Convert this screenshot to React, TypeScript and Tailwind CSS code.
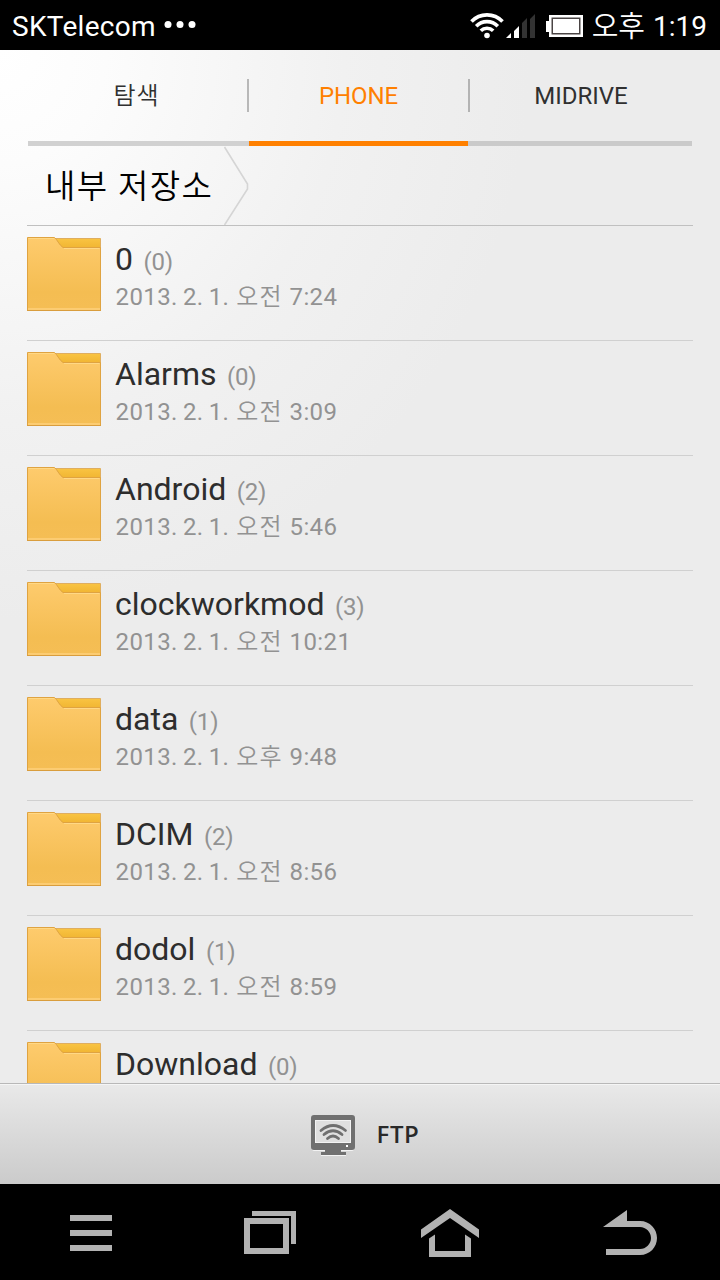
type Folder = { name: string; count: number; date?: string; ampm?: string; time?: string };

const folders: Folder[] = [
    { name: '0', count: 0, date: '2013. 2. 1.', ampm: '오전', time: '7:24' },
    { name: 'Alarms', count: 0, date: '2013. 2. 1.', ampm: '오전', time: '3:09' },
    { name: 'Android', count: 2, date: '2013. 2. 1.', ampm: '오전', time: '5:46' },
    { name: 'clockworkmod', count: 3, date: '2013. 2. 1.', ampm: '오전', time: '10:21' },
    { name: 'data', count: 1, date: '2013. 2. 1.', ampm: '오후', time: '9:48' },
    { name: 'DCIM', count: 2, date: '2013. 2. 1.', ampm: '오전', time: '8:56' },
    { name: 'dodol', count: 1, date: '2013. 2. 1.', ampm: '오전', time: '8:59' },
    { name: 'Download', count: 0 },
];

function StatusBar() {
    return (
        <header className="flex h-[50px] shrink-0 items-center bg-black pl-3 pr-[13px] text-[28px] leading-[50px] text-white">
            <span className="pt-1 tracking-[0.3px]">SKTelecom</span>
            <svg className="ml-2" width="34" height="10" viewBox="0 0 34 10" fill="#fff">
                <circle cx="4" cy="4.5" r="3.5" />
                <circle cx="16" cy="4.5" r="3.5" />
                <circle cx="28" cy="4.5" r="3.5" />
            </svg>
            <svg className="ml-auto" width="114" height="30" viewBox="0 0 114 30">
                {/* Wifi */}
                <g fill="none" stroke="#fff" strokeWidth="3.6">
                    <path d="M1.5 11.5a21.5 21.5 0 0 1 31 0" />
                    <path d="M6.2 16.2a15 15 0 0 1 21.6 0" />
                    <path d="M10.8 20.8a8.8 8.8 0 0 1 12.4 0" />
                </g>
                <circle cx="17" cy="25.5" r="2.8" fill="#fff" />
                {/* Signal */}
                <path d="M36 28l5-5v5zM44 28v-7l5-5v12z" fill="#fff" />
                <path d="M52 28V13l5-5v20zM60 28V9l5-5v24z" fill="#333" />
                {/* Battery */}
                <path d="M79 5h34v22H79v-5h-3V11h3z" fill="#fff" />
                <path d="M81.500 7.500h29v17h-29z" fill="#4a4444" />
                <rect x="83" y="9" width="26" height="14" fill="#fff" />
            </svg>
            <span className="ml-2 pt-1 text-[29px] font-[350]">오후</span>
            <span className="ml-2 pt-1">1:19</span>
        </header>
    );
}

function Tabs() {
    return (
        <nav className="mx-7 grid h-24 shrink-0 grid-cols-[221px_219px_224px] text-center text-[24px] leading-[93px] text-[#303030]">
            <div className="flex h-24 items-center justify-end border-b-[5px] border-[#d1d1d1]">
                <span className="flex-1 pr-0.5 pt-0.5 text-[24px] font-[350] tracking-[1px]">탐색</span>
                <span className="h-[33px] w-0.5 bg-[#b8b8b8]" />
            </div>
            <div className="h-24 border-b-[5px] border-[#ff8000] tracking-[-0.1px] text-[#ff8000]">PHONE</div>
            <div className="flex h-24 items-center border-b-[5px] border-[#cacaca]">
                <span className="h-[33px] w-0.5 bg-[#b3b3b3]" />
                <span className="flex-1 pt-0.5">MIDRIVE</span>
            </div>
        </nav>
    );
}

function Breadcrumb() {
    return (
        <div className="mx-[27px] flex h-20 shrink-0 items-center border-b border-[#c0c0c0] pl-[18px] text-black">
            <span className="w-[178px] whitespace-nowrap pt-0.5 text-[33px] font-[350] leading-[79px] tracking-[1.4px]">내부 저장소</span>
            <svg width="26" height="79" viewBox="0 0 26 79" fill="none" stroke="#d5d5d5" strokeWidth="1.6">
                <path d="M1.5 1L24.5 38V43L1.5 79" />
            </svg>
        </div>
    );
}

function FolderIcon() {
    return (
        <svg className="shrink-0" width="74" height="74" viewBox="0 0 74 74">
            <defs>
                <linearGradient id="front" x1="0" y1="0" x2="0" y2="1">
                    <stop offset="0" stopColor="#fecb6d" />
                    <stop offset="0.75" stopColor="#f4bd52" />
                    <stop offset="1" stopColor="#f5be55" />
                </linearGradient>
                <linearGradient id="back" x1="0" y1="0" x2="0" y2="1">
                    <stop offset="0" stopColor="#f9c443" />
                    <stop offset="1" stopColor="#eeb02d" />
                </linearGradient>
            </defs>
            <path d="M26 1.5H73.5V14H26z" fill="url(#back)" stroke="#dfae60" />
            <path d="M.5.5H27.5C30 2 32 8 36 10.5H73.5V73.5H.5z" fill="url(#front)" stroke="#dfa341" />
            <path d="M1.500 1.500H27M37 11.5H72.5" fill="none" stroke="#ffd886" />
            <path d="M1 72H73" stroke="#fccc72" strokeWidth="2" />
            <path d="M0 73.5H74" stroke="#d99d3d" />
        </svg>
    );
}

function FolderRow({ folder }: { folder: Folder }) {
    return (
        <li className="flex h-[115px] shrink-0 gap-3.5 border-b border-[#d0d0d0] pt-[11px]">
            <FolderIcon />
            <div className="whitespace-nowrap">
                <div className="flex h-[44px] items-baseline gap-[10.5px] leading-[44px]">
                    <span className="text-[32px] text-[#2d2d2d]">{folder.name}</span>
                    <span className="text-[24px] tracking-[-0.2px] text-[#929292]">({folder.count})</span>
                </div>
                {folder.date && (
                    <div className="flex h-8 items-baseline gap-[7px] pl-[0.5px] text-[24px] leading-8 tracking-[0.4px] text-[#929292]">
                        <span className="[word-spacing:-1.2px]">{folder.date}</span>
                        <span className="font-[350] tracking-[1px]">{folder.ampm}</span>
                        <span>{folder.time}</span>
                    </div>
                )}
            </div>
        </li>
    );
}

function FtpBar() {
    return (
        <div className="flex h-[101px] shrink-0 items-center justify-center border-t border-[#b8b8b8] bg-linear-to-b from-[#e9e9e9] to-[#cbcbcb] pl-2.5 shadow-[inset_0_1px_0_#f5f5f5]">
            <svg className="mt-[3px]" width="44" height="42" viewBox="0 0 44 42">
                <path d="M1 33H43Q43 36 41 36H30V38H35V41H10V38H14V36H3Q1 36 1 33z" fill="#f3f3f3" />
                <path d="M3 0H41q3 0 3 3V32q0 3-3 3H30v2h5v3H10v-3h4v-2H3q-3 0-3-3V3q0-3 3-3z" fill="#707070" />
                <path d="M4 5H40V28H4z" fill="#f3f3f3" />
                <path d="M5 6H39V27H5z" fill="#e0e0e0" />
                <rect x="35" y="30" width="2" height="2" fill="#fff" />
                <g fill="none" stroke="#707070" strokeWidth="2.8" strokeLinecap="round">
                    <path d="M10 15.5Q22 5.5 34.500 15.500" />
                    <path d="M13 19.5Q22 12 31 19.5" />
                    <path d="M16.5 23.5Q22 18.5 27.5 23.5" />
                </g>
            </svg>
            <span className="ml-[22px] font-['Open_Sans'] text-[24px] font-semibold tracking-[0.6px] text-[#292929]">FTP</span>
        </div>
    );
}

function NavBar() {
    return (
        <footer className="flex h-24 shrink-0 items-center bg-black pl-[70px] text-[#b2b2b2]">
            <svg width="42" height="60" viewBox="0 0 42 60" fill="currentColor">
                <path d="M0 13h42v6H0zM0 28h42v6H0zM0 43h42v6H0z" />
            </svg>
            <svg className="ml-[132px]" width="52" height="60" viewBox="0 0 52 60" fill="currentColor">
                <path d="M8 9H52V42H47V14H8z" />
                <path d="M0 16H45V52H0zM6 22V46H39V22z" fillRule="evenodd" />
            </svg>
            <svg className="ml-[125px]" width="58" height="60" viewBox="0 0 58 60" fill="currentColor">
                <path d="M29 7L58 27.5V36L29 16L0 36V27.5z" />
                <path d="M8 36.5L14 32.5V49H44V32.5L50 36.5V55H8z" />
            </svg>
            <svg className="ml-[124px]" width="54" height="60" viewBox="0 0 54 60" fill="currentColor">
                <path d="M0 25L24 8V19H37C47 19 54 27 54 36S47 53 37 53H3V47H37C43 47 48 42 48 36S43 25 37 25z" />
            </svg>
        </footer>
    );
}

export default function App() {
    return (
        <main className="flex h-[1280px] w-[720px] flex-col overflow-hidden bg-[#ececec] bg-[radial-gradient(ellipse_530px_570px_at_0_50px,#ffffff,#fcfcfc_20%,#f1f1f1_65%,#ececec)] font-[Roboto,'Noto_Sans_CJK_KR',sans-serif]">
            <StatusBar />
            <Tabs />
            <Breadcrumb />
            <ul className="mx-[27px] flex min-h-0 flex-1 flex-col overflow-hidden">
                {folders.map((folder) => (
                    <FolderRow key={folder.name} folder={folder} />
                ))}
            </ul>
            <FtpBar />
            <NavBar />
        </main>
    );
}
